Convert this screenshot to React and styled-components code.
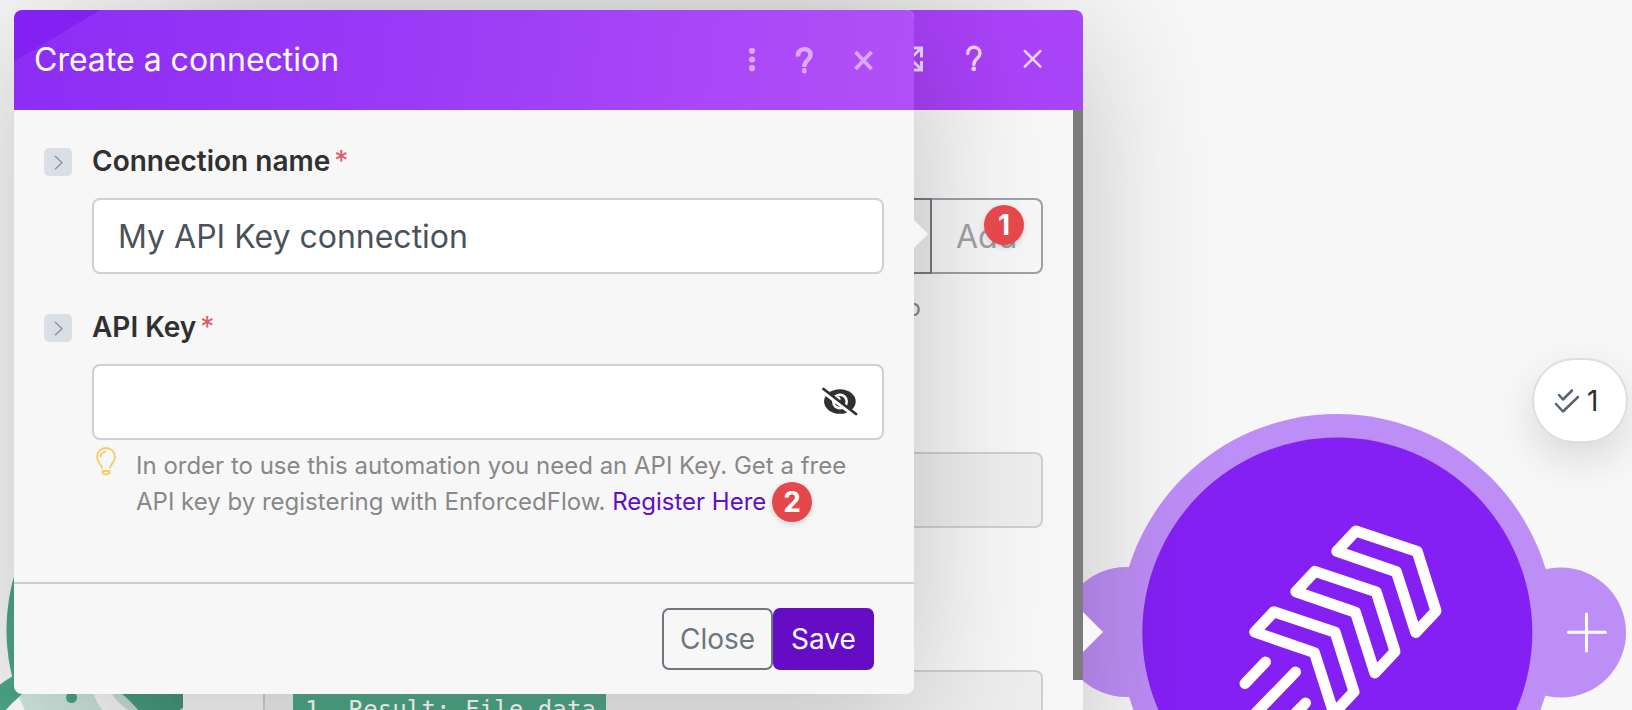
import React from 'react';
import styled, { createGlobalStyle } from 'styled-components';

const GlobalStyle = createGlobalStyle`
  * { box-sizing: border-box; }
  body {
    margin: 0;
    background: #f7f7f7;
    font-family: Inter, "Liberation Sans", sans-serif;
    overflow: hidden;
  }
`;

const Canvas = styled.main`
  position: relative;
  width: 1632px;
  height: 710px;
  overflow: hidden;
  background: #f7f7f7;
`;

const Nodes = styled.svg`
  position: absolute;
  inset: 0;
`;

const OperationsBubble = styled.div`
  position: absolute;
  left: 1532px;
  top: 358px;
  width: 96px;
  height: 85px;
  display: flex;
  align-items: center;
  padding-left: 20px;
  gap: 7px;
  border: 2px solid #d9dfe4;
  border-radius: 43px;
  background: #fff;
  box-shadow: 0 16px 40px rgba(0, 0, 0, 0.12);
  font-size: 28px;
  color: #2d2d2d;
`;

const Dialog = styled.section`
  position: absolute;
  top: 10px;
  left: ${(p) => p.$left}px;
  width: 900px;
  height: ${(p) => p.$height}px;
  display: flex;
  flex-direction: column;
  border-radius: 8px;
  background: #f7f7f7;
  box-shadow: 0 20px 140px rgba(0, 0, 0, 0.21);
`;

const Header = styled.header`
  flex: none;
  height: 100px;
  display: flex;
  align-items: center;
  justify-content: space-between;
  padding-left: 20px;
  border-radius: 8px 8px 0 0;
  background: ${(p) => p.$fill};
  color: #fff;
`;

const Title = styled.h1`
  margin: 0;
  font-size: 32px;
  font-weight: 400;
  line-height: 40px;
`;

const HeaderIcons = styled.svg`
  flex: none;
  margin-left: auto;
`;

const SettingsBody = styled.div`
  flex: 1;
  display: flex;
  align-items: flex-start;
  min-height: 0;
`;

const SettingsForm = styled.div`
  flex: 1;
  display: flex;
  flex-direction: column;
  padding: 88px 30px 0 80px;
`;

const Scrollbar = styled.div`
  width: 10px;
  height: 570px;
  background: #7c7c7c;
`;

const ConnectionRow = styled.div`
  display: flex;
  height: 76px;
`;

const ConnectionSelect = styled.div`
  width: 669px;
  border: 2px solid #747b84;
  border-radius: 8px 0 0 8px;
  background: #eeeeee;
`;

const AddButton = styled.button`
  flex: 1;
  padding: 0 0 0 24px;
  text-align: left;
  border: 2px solid #9ba1a7;
  border-left: 0;
  border-radius: 0 8px 8px 0;
  background: transparent;
  color: #9fa3a7;
  font: 400 32px Inter, sans-serif;
`;

const SettingsHint = styled.p`
  margin: 16px 0 0;
  width: 658px;
  height: 36px;
  text-align: right;
  font-size: 24px;
  line-height: 36px;
  color: #868686;
`;

const DisabledField = styled.div`
  height: 76px;
  display: flex;
  align-items: flex-start;
  margin-top: ${(p) => p.$top}px;
  padding: 17px 28px 0;
  border: 2px solid #cfcfcf;
  border-radius: 8px;
  background: #eeeeee;
`;

const MappedValue = styled.span`
  width: 313px;
  height: 44px;
  padding-left: 12px;
  border-radius: 4px;
  background: #50a888;
  color: #fff;
  font: 24px/42px "DejaVu Sans Mono", monospace;
  letter-spacing: 0.1px;
  white-space: nowrap;
`;

const ConnectionBody = styled.div`
  flex: 1;
  display: flex;
  flex-direction: column;
  gap: 40px;
  padding: 38px 30px 0;
`;

const Field = styled.div`
  display: grid;
  grid-template-columns: 28px 792px;
  column-gap: 20px;
`;

const Expander = styled.button`
  width: 28px;
  height: 28px;
  padding: 0;
  display: flex;
  border: 0;
  border-radius: 5px;
  background: #d9dfe4;
`;

const Label = styled.label`
  display: flex;
  gap: 4px;
  height: 28px;
  font-size: 28px;
  font-weight: 600;
  line-height: 27px;
  color: #303030;
`;

const Required = styled.span`
  font-weight: 400;
  color: #dc5a67;
`;

const InputBox = styled.div`
  grid-column: 2;
  height: 76px;
  margin-top: 22px;
  display: flex;
  align-items: center;
  justify-content: space-between;
  padding: 0 24px;
  border: 2px solid #d0d0d0;
  border-radius: 8px;
  background: #fff;
  font-size: 32px;
  color: #4b5259;
`;

const Help = styled.div`
  grid-column: 2;
  display: flex;
  gap: 20px;
  padding: 7px 0 0 4px;
  font-size: 24px;
  line-height: 36px;
  color: #888;
`;

const HelpText = styled.p`
  margin: 1px 0 0;
  white-space: nowrap;
`;

const RegisterLink = styled.a`
  color: #610ec4;
`;

const Footer = styled.footer`
  flex: none;
  height: 112px;
  display: flex;
  justify-content: flex-end;
  padding: 24px 40px 0 0;
  border-top: 2px solid #cecece;
`;

const FooterButton = styled.button`
  width: ${(p) => p.$width}px;
  height: 62px;
  padding: 0;
  border: 2px solid ${(p) => (p.$primary ? '#640dc4' : '#6e7680')};
  border-radius: 7px;
  background: ${(p) => (p.$primary ? '#640dc4' : 'transparent')};
  color: ${(p) => (p.$primary ? '#fff' : '#6e7680')};
  font: 400 28px Inter, sans-serif;
`;

const Pointer = styled.div`
  position: absolute;
  left: ${(p) => p.$x}px;
  top: ${(p) => p.$y}px;
  border: ${(p) => p.$size}px solid transparent;
  border-left-color: #f7f7f7;
  border-right-width: 0;
`;

const StepMarker = styled.div`
  position: absolute;
  left: ${(p) => p.$x}px;
  top: ${(p) => p.$y}px;
  width: 40px;
  height: 40px;
  display: flex;
  align-items: center;
  justify-content: center;
  border-radius: 50%;
  background: #e5484b;
  box-shadow: 0 2px 6px rgba(0, 0, 0, 0.15);
  color: #fff;
  font-size: 28px;
  font-weight: 700;
`;

const FRONT_FILL =
  'linear-gradient(149.2deg, #8420f2 0 44px, transparent 44.5px), linear-gradient(97deg, #8b2df5 0%, #9a39f6 42%, #a946f7 75%, #b150f8 100%)';

const Chevron = () => (
  <svg width="28" height="28" fill="none" stroke="#8794a0" strokeWidth="1.4">
    <path d="M11 8l7 6.7-7 6.5" />
  </svg>
);

const RocketModule = () => (
  <g>
    <g fill="#be8ef7">
      <circle cx="1126" cy="632" r="65" />
      <circle cx="1561" cy="632.5" r="65" />
      <circle cx="1337" cy="632" r="218" />
    </g>
    <g fill="none" stroke="#c59bf8" strokeWidth="0.6" strokeDasharray="2 4">
      <path d="M1128 568a219 219 0 0 0 0 128" />
      <path d="M1546 568a219 219 0 0 1 0 128" />
    </g>
    <circle cx="1337.3" cy="632.5" r="195" fill="#8520f5" />
    <g fill="none" stroke="#fff" strokeWidth="11" strokeLinecap="round" strokeLinejoin="round">
      {[0, 1, 2].map((i) => (
        <path
          key={i}
          transform={`translate(${-41 * i} ${40.4 * i})`}
          d="M1355.8 531L1417.2 551.5L1436 611L1415.8 632.5L1396.4 571.8L1336.8 551.3Z"
        />
      ))}
      <path d="M1265.5 662L1245 683.5M1295.5 672L1248 721M1305.5 703L1280 729" />
    </g>
    <path d="M1568.5 632.3h37M1586.5 614v37" stroke="#fff" strokeWidth="3" strokeLinecap="round" />
  </g>
);

const SheetModule = () => (
  <g>
    <circle cx="201.5" cy="630" r="195" fill="#4ca586" />
    <circle cx="72" cy="778" r="118" fill="#4ca586" />
    <path d="M5 711Q30 680 71 680Q112 680 139 711Z" fill="#fff" />
    <path d="M19 697L25 711H103Q97 704 93 692Q60 672 24 692ZM112 694L122 694Q132 702 138 711H130Q119 705 112 694Z" fill="#cfe8e0" />
    <circle cx="71.6" cy="697.5" r="5.5" fill="#4ca586" />
    <path d="M178 711L184 707V711Z" fill="#eee" />
  </g>
);

export default function App() {
  return (
    <Canvas>
      <GlobalStyle />
      <Nodes width="1632" height="710">
        <SheetModule />
        <RocketModule />
      </Nodes>

      <OperationsBubble>
        <svg width="26" height="26" fill="none" stroke="#57636f" strokeWidth="2.5" strokeLinecap="round" strokeLinejoin="round">
          <path d="M5 7l4 4.5 9-9M2 16l7 7.5L24 9" />
        </svg>
        1
      </OperationsBubble>

      <Dialog $left={183} $height={760}>
        <Header $fill="linear-gradient(97deg, #8b2df5 0%, #a83ef6 75%, #a945f8 100%)">
          <HeaderIcons width="200" height="100" fill="none" stroke="#ead4fc" strokeWidth="3">
            <path d="M29 38h9.5v9.5M38 38.5L29 47M29 50.5L38 59M38.5 51v9H29" />
            <path d="M84.7 43.5C84.7 35 97 35.5 97 43.2C97 48.5 90.8 48.5 90.8 54.5" strokeWidth="3.4" strokeLinecap="round" />
            <circle cx="90.7" cy="58.8" r="2.4" fill="#ead4fc" stroke="none" />
            <path d="M141.8 41l15.6 15.6M157.4 41l-15.6 15.6" strokeWidth="2.5" strokeLinecap="round" />
          </HeaderIcons>
        </Header>
        <SettingsBody>
          <SettingsForm>
            <ConnectionRow>
              <ConnectionSelect />
              <AddButton>Add</AddButton>
            </ConnectionRow>
            <SettingsHint>to</SettingsHint>
            <DisabledField $top={126} />
            <DisabledField $top={142}>
              <MappedValue>1. Result: File data</MappedValue>
            </DisabledField>
          </SettingsForm>
          <Scrollbar />
        </SettingsBody>
      </Dialog>
      <Pointer $x={1083} $y={612} $size={20.5} />

      <Dialog $left={14} $height={684}>
        <Header $fill={FRONT_FILL}>
          <Title>Create a connection</Title>
          <HeaderIcons width="200" height="100" fill="#dba8fa">
            <circle cx="38" cy="40.8" r="3.1" />
            <circle cx="38" cy="49.5" r="3.1" />
            <circle cx="38" cy="58.2" r="3.1" />
            <g fill="none" stroke="#dba8fa">
              <path d="M84 46.5C83 37 96.5 37 96.5 44.5C96.5 50.5 90.3 49.5 90.3 57" strokeWidth="4.5" />
              <path d="M141.5 42l16 17M157.5 42l-16 17" strokeWidth="3.8" />
            </g>
            <rect x="88" y="58" width="4.6" height="5.6" rx="2" />
          </HeaderIcons>
        </Header>
        <ConnectionBody>
          <Field>
            <Expander><Chevron /></Expander>
            <Label>Connection name<Required>*</Required></Label>
            <InputBox>My API Key connection</InputBox>
          </Field>
          <Field>
            <Expander><Chevron /></Expander>
            <Label>API Key<Required>*</Required></Label>
            <InputBox>
              <span />
              <svg width="36" height="30" viewBox="0 0 36 30">
                <ellipse cx="17.9" cy="14.5" rx="15.8" ry="12.3" fill="#303030" />
                <circle cx="18" cy="14.5" r="8" fill="#fff" />
                <circle cx="18" cy="14.5" r="5.4" fill="#303030" />
                <circle cx="16" cy="12" r="2.5" fill="#fff" />
                <path d="M0 4L32 28.5" stroke="#fff" strokeWidth="3.5" />
                <path d="M1.5 2L34 27" stroke="#303030" strokeWidth="2.8" strokeLinecap="round" />
              </svg>
            </InputBox>
            <Help>
              <svg width="20" height="29" fill="none" stroke="#f8cb63" strokeWidth="1.8" strokeLinejoin="round">
                <path d="M6 21.5C6 17 1 15.5 1 10a9 9 0 0 1 18 0c0 5.5-5 7-5 11.5M4.500 10c0-3 2.500-5.300 5.500-5.300M6.500 24h7v2q-3.500 3-7 0z" />
              </svg>
              <HelpText>
                In order to use this automation you need an API Key. Get a free
                <br />
                API key by registering with EnforcedFlow. <RegisterLink>Register Here</RegisterLink>
              </HelpText>
            </Help>
          </Field>
        </ConnectionBody>
        <Footer>
          <FooterButton $width={111}>Close</FooterButton>
          <FooterButton $width={101} $primary>Save</FooterButton>
        </Footer>
      </Dialog>
      <Pointer $x={914} $y={220} $size={14} />

      <StepMarker $x={984} $y={205}>1</StepMarker>
      <StepMarker $x={772} $y={482}>2</StepMarker>
    </Canvas>
  );
}
